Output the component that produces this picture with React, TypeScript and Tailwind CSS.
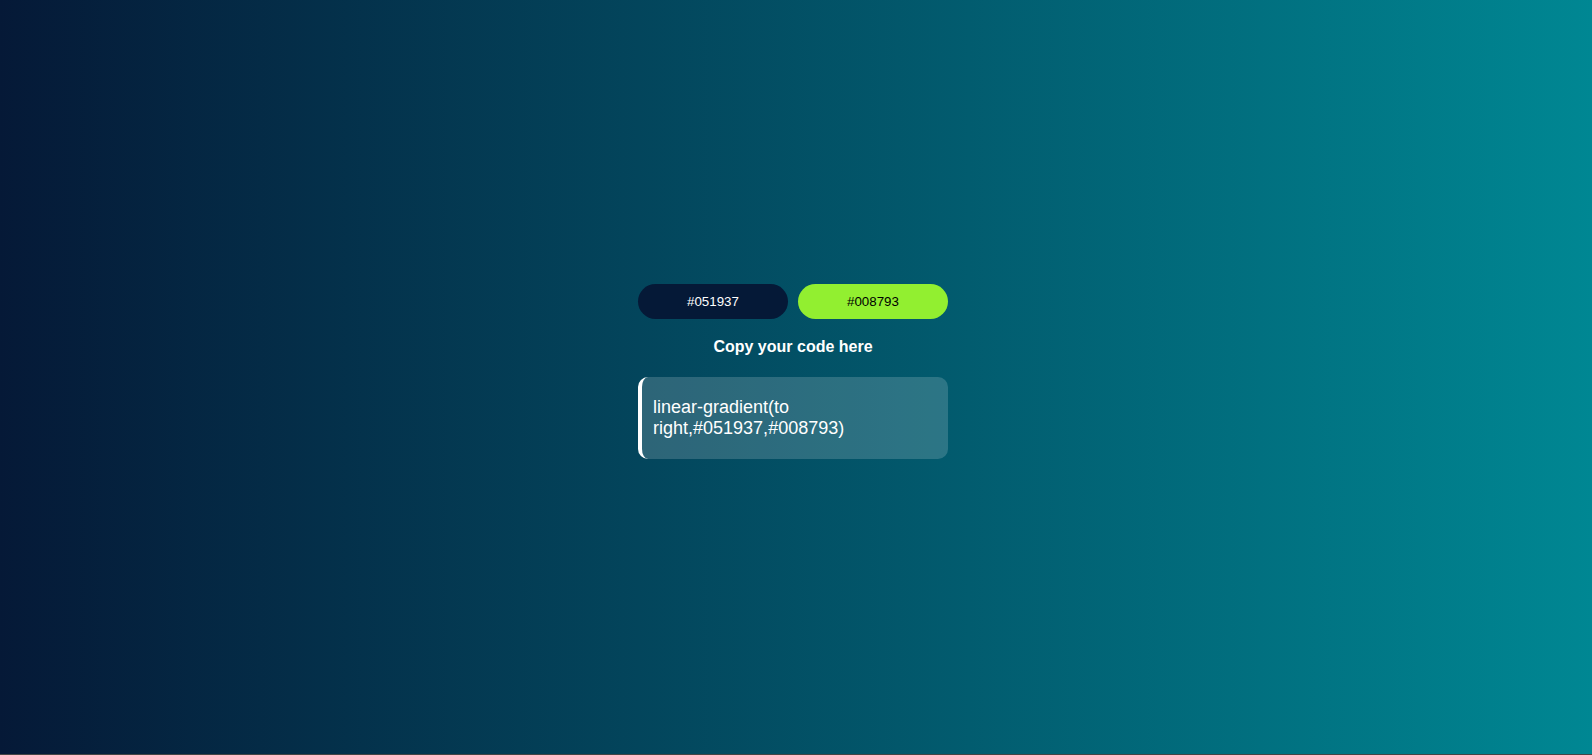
export default function App() {
  const from = "#051937";
  const to = "#008793";

  return (
    <div className="flex h-[755px] w-full flex-col font-['Liberation_Sans',Arial,sans-serif]">
      <main className="flex h-[754px] w-full flex-col items-center bg-[linear-gradient(to_right,#051937,#008793)] pr-[6px] pt-[284px]">
        <div className="flex w-[310px] flex-col items-center">
          <div className="flex w-full gap-[10px]">
            <button className="h-[35px] w-[150px] rounded-full bg-[#051937] text-[13.33px] text-white">
              {from}
            </button>
            <button className="h-[35px] w-[150px] rounded-full bg-[#92ef30] text-[13.33px] text-black">
              {to}
            </button>
          </div>
          <h3 className="mt-[19px] text-[16px] leading-[18px] font-bold text-white">Copy your code here</h3>
          <div className="mt-[21px] w-full rounded-[10px] border-l-4 border-white bg-white/[0.17] py-[20px] pr-[10px] pl-[11px] text-[18px] leading-[normal] text-white">
            linear-gradient(to right,{from},{to})
          </div>
        </div>
      </main>
      <div className="h-px w-full bg-[#454545]" />
    </div>
  );
}
